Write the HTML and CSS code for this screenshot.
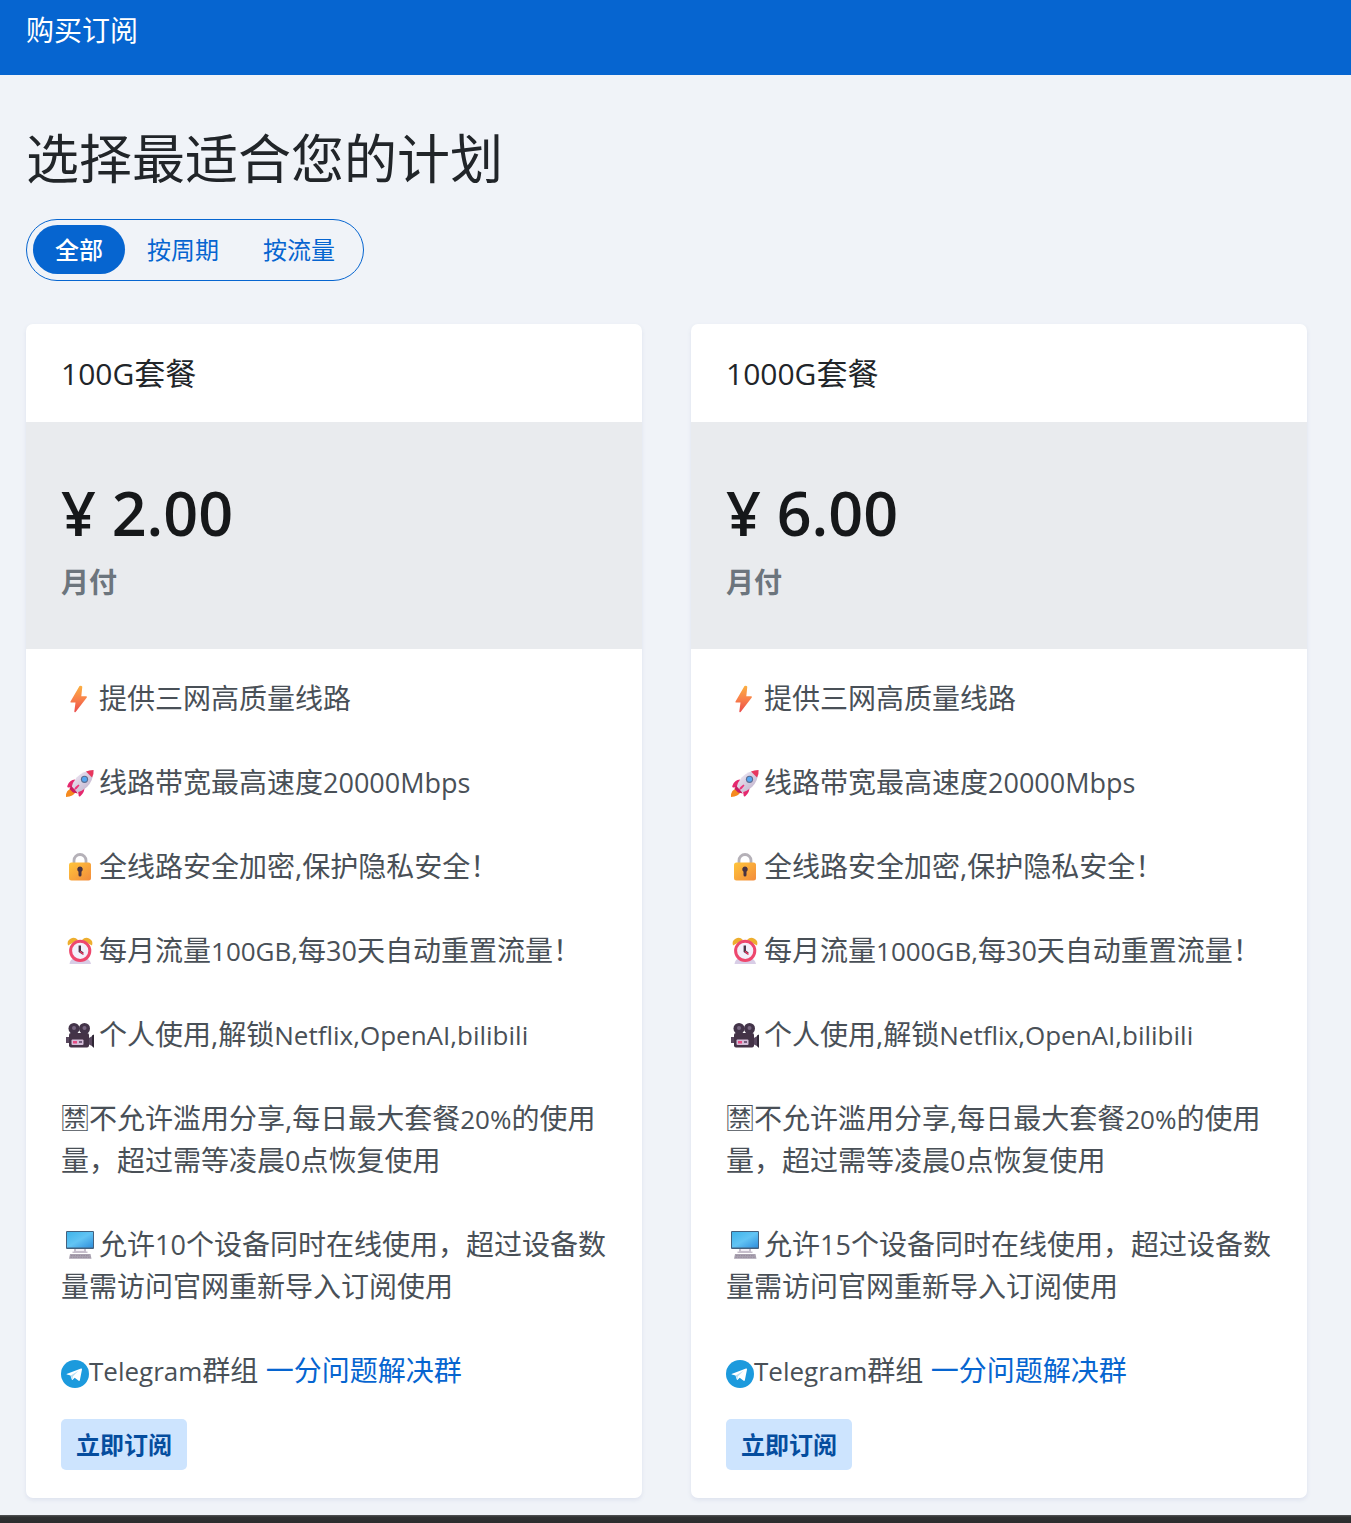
FILE: index.html
```html
<!DOCTYPE html>
<html lang="zh-CN">
<head>
<meta charset="utf-8">
<meta name="viewport" content="width=device-width, initial-scale=1">
<title>购买订阅</title>
<link rel="stylesheet" href="styles.css">
</head>
<body>
<svg class="sprite" aria-hidden="true">
  <defs>
    <linearGradient id="g-bolt" x1="0" y1="0" x2="0" y2="1"><stop offset="0" stop-color="#fbb040"/><stop offset=".5" stop-color="#f9814a"/><stop offset="1" stop-color="#ea4a4a"/></linearGradient>
    <linearGradient id="g-rocket" x1="0" y1="0" x2="1" y2="1"><stop offset="0" stop-color="#f6f0fa"/><stop offset="1" stop-color="#b9aac6"/></linearGradient>
    <linearGradient id="g-lock" x1="0" y1="0" x2="1" y2="1"><stop offset="0" stop-color="#ffc53a"/><stop offset="1" stop-color="#f38b3c"/></linearGradient>
    <linearGradient id="g-screen" x1="0" y1="0" x2="1" y2="1"><stop offset="0" stop-color="#3fb4ea"/><stop offset=".5" stop-color="#62c4f4"/><stop offset="1" stop-color="#2f8fdc"/></linearGradient>
    <symbol id="i-bolt" viewBox="0 0 38 30">
      <path d="M18.500 2 9.500 17.500Q9 18.500 10 18.500H14.500L13.300 27.500Q13.500 29 14.800 27.800L25.800 13.500Q26.300 12.400 25 12.300H20.300L21.300 2.800Q20.500 1 18.500 2Z" fill="url(#g-bolt)"/>
    </symbol>
    <symbol id="i-rocket" viewBox="0 0 38 30">
      <path d="M11 20.500Q4.500 21.500 5 29Q12.500 28.500 14.500 24Z" fill="#f58a1f"/>
      <path d="M14 11.500Q8.500 12 6.500 17.500Q5.500 19.500 8 19.500L15 18ZM23.500 18Q24 24 19.500 28Q17.500 29.500 17.500 26.500L16.500 20Z" fill="#e5286e"/>
      <path d="M32.500 2Q22 2.500 15.500 9.500Q11.500 14.500 10.500 19.500L15.500 24.500Q20.500 23.500 26 19Q32.500 12.500 32.500 2Z" fill="url(#g-rocket)"/>
      <path d="M32.500 2Q28.500 2 25 3.500L31 9.500Q33 5.500 32.500 2Z" fill="#e8375d"/>
      <path d="M10 17.500 17 25.500 12 24.500 8.500 21Z" fill="#c91d62"/>
      <path d="M17.500 16.500Q14.500 18 12.500 22.500Q16.500 21 18.500 17.500Z" fill="#ee3379"/>
      <circle cx="23.500" cy="11.300" r="3.600" fill="#596d91"/><circle cx="23.500" cy="11.300" r="2.500" fill="#56a6f0"/>
    </symbol>
    <symbol id="i-lock" viewBox="0 0 38 30">
      <path d="M13 13V8.500a6 6 0 0 1 12 0V13" fill="none" stroke="#b5b1b8" stroke-width="2.800"/>
      <rect x="8" y="10.500" width="22" height="18" rx="2.500" fill="url(#g-lock)"/>
      <path d="M19 14.500a2.900 2.900 0 0 1 1.500 5.300V23a1.500 1.500 0 0 1-3 0V19.800A2.900 2.900 0 0 1 19 14.500Z" fill="#493341"/>
    </symbol>
    <symbol id="i-clock" viewBox="0 0 38 30">
      <path d="M8.500 28Q9 23 14 22H24Q29 23 30 28Z" fill="#d8cde6"/>
      <path d="M7 9.500Q5.500 5 9.500 2.800Q13.500 0 17 4ZM31 9.500Q32.500 5 28.500 2.800Q24.500 0 21 4Z" fill="#edae2f"/>
      <circle cx="19.200" cy="14.800" r="9.600" fill="#f3f0fb" stroke="#ee476d" stroke-width="3"/>
      <path d="M18.800 9.500V15.300L22 17.500" fill="none" stroke="#493747" stroke-width="2.400"/><path d="M19 15.300 22.500 18.500" stroke="#e83862" stroke-width="1.500"/>
    </symbol>
    <symbol id="i-camera" viewBox="0 0 38 30">
      <path d="M5 17h3v6H5ZM27 18.500 33 15V27L27 24Z" fill="#59485f"/>
      <rect x="8" y="13" width="20" height="14.500" rx="2" fill="#443347"/>
      <circle cx="13" cy="8.500" r="5.500" fill="#433449"/><circle cx="23.500" cy="8.500" r="5.500" fill="#433449"/>
      <circle cx="13" cy="8" r="2" fill="#776680"/><circle cx="23.500" cy="8" r="2" fill="#776680"/>
      <rect x="10.500" y="19.500" width="12" height="5.500" rx="1" fill="#d4bdd8"/>
      <path d="M12 21h4v2.500h-4Z" fill="#e74b83"/><path d="M18 21h3v2h-3Z" fill="#755e7d"/>
      <path d="M31 15.500 33 14.500V28L31 26Z" fill="#2f2635"/>
    </symbol>
    <symbol id="i-computer" viewBox="0 0 38 30">
      <rect x="5" y="1" width="28" height="18" rx="1" fill="#44617e"/>
      <rect x="6" y="2" width="26" height="15.500" fill="url(#g-screen)"/>
      <path d="M13 19h12v2.500h1.500V23h-15V21.500H13Z" fill="#c7bfcc"/>
      <path d="M15 19h8v2h-8Z" fill="#f2eff5"/>
      <path d="M9 24h20.500l1 4.800H8Z" fill="#aaa2b0"/>
      <path d="M10 25.500h18M9.500 27.300h19" stroke="#8b8293" stroke-width=".6" stroke-dasharray="1.500 1"/>
    </symbol>
    <symbol id="i-telegram" viewBox="0 0 28 28">
      <circle cx="14" cy="14" r="14" fill="#1c9add"/>
      <path d="M5.500 14 20 8.500Q21.200 8.200 21 9.500L18.900 20Q18.500 21.400 17.300 20.600L13.700 17.800 11.700 19.700Q10.900 20.300 10.700 19.200L9.500 15.500 6 14.400Q5.300 14.200 5.500 14Z" fill="#fff"/>
      <path d="M9.700 15.500 17.500 10.700 12 16.200 11.300 19.500Z" fill="#b9dff3"/>
    </symbol>
  </defs>
</svg>

<header class="topbar">购买订阅</header>

<main class="content">
  <h1 class="page-title">选择最适合您的计划</h1>
  <nav class="tabs" aria-label="套餐类型">
    <button class="tab tab-active" type="button">全部</button>
    <button class="tab" type="button">按周期</button>
    <button class="tab" type="button">按流量</button>
  </nav>

  <div class="plans">
    <article class="card">
      <h2 class="card-title"><span class="plan-size">100G</span>套餐</h2>
      <div class="price-block">
        <p class="price">¥ 2.00</p>
        <p class="period">月付</p>
      </div>
      <div class="card-body">
        <ul class="features">
          <li><svg class="emoji"><use href="#i-bolt"/></svg>提供三网高质量线路</li>
          <li><svg class="emoji"><use href="#i-rocket"/></svg>线路带宽最高速度<span class="num">20000Mbps</span></li>
          <li><svg class="emoji"><use href="#i-lock"/></svg>全线路安全加密,保护隐私安全！</li>
          <li><svg class="emoji"><use href="#i-clock"/></svg>每月流量<span class="latin">100GB,</span>每<span class="num">30</span>天自动重置流量！</li>
          <li><svg class="emoji"><use href="#i-camera"/></svg>个人使用,解锁<span class="latin">Netflix,OpenAI,bilibili</span></li>
          <li>🈲不允许滥用分享,每日最大套餐<span class="latin">20%</span>的使用量，超过需等凌晨<span class="num">0</span>点恢复使用</li>
          <li><svg class="emoji"><use href="#i-computer"/></svg>允许<span class="num">10</span>个设备同时在线使用，超过设备数量需访问官网重新导入订阅使用</li>
          <li><svg class="telegram"><use href="#i-telegram"/></svg><span class="latin">Telegram</span>群组 <a href="#group">一分问题解决群</a></li>
        </ul>
        <button class="subscribe" type="button">立即订阅</button>
      </div>
    </article>

    <article class="card">
      <h2 class="card-title"><span class="plan-size">1000G</span>套餐</h2>
      <div class="price-block">
        <p class="price">¥ 6.00</p>
        <p class="period">月付</p>
      </div>
      <div class="card-body">
        <ul class="features">
          <li><svg class="emoji"><use href="#i-bolt"/></svg>提供三网高质量线路</li>
          <li><svg class="emoji"><use href="#i-rocket"/></svg>线路带宽最高速度<span class="num">20000Mbps</span></li>
          <li><svg class="emoji"><use href="#i-lock"/></svg>全线路安全加密,保护隐私安全！</li>
          <li><svg class="emoji"><use href="#i-clock"/></svg>每月流量<span class="latin">1000GB,</span>每<span class="num">30</span>天自动重置流量！</li>
          <li><svg class="emoji"><use href="#i-camera"/></svg>个人使用,解锁<span class="latin">Netflix,OpenAI,bilibili</span></li>
          <li>🈲不允许滥用分享,每日最大套餐<span class="latin">20%</span>的使用量，超过需等凌晨<span class="num">0</span>点恢复使用</li>
          <li><svg class="emoji"><use href="#i-computer"/></svg>允许<span class="num">15</span>个设备同时在线使用，超过设备数量需访问官网重新导入订阅使用</li>
          <li><svg class="telegram"><use href="#i-telegram"/></svg><span class="latin">Telegram</span>群组 <a href="#group">一分问题解决群</a></li>
        </ul>
        <button class="subscribe" type="button">立即订阅</button>
      </div>
    </article>
  </div>
</main>
<footer class="bottom-bar"></footer>
</body>
</html>
```
FILE: styles.css
```css
* { box-sizing: border-box; }

body {
  margin: 0;
  min-height: 100vh;
  display: flex;
  flex-direction: column;
  background: #f0f3f8;
  color: #212529;
  font-family: "Open Sans", "Noto Sans CJK SC", sans-serif;
  font-size: 28px;
  line-height: 42px;
}

h1, h2, p, ul { margin: 0; padding: 0; }
button { font-family: inherit; border: 0; cursor: pointer; }
.sprite { position: absolute; width: 0; height: 0; }

.topbar {
  height: 75px;
  padding: 9px 26px;
  background: #0665d0;
  color: #fff;
}

.content {
  flex: 1;
  padding: 52px 44px 17px 26px;
}

.page-title {
  font-size: 53px;
  font-weight: 400;
  line-height: 64px;
}

.tabs {
  display: inline-flex;
  margin: 28px 0 43px;
  padding: 5px 6px 6px;
  border: 1px solid #0665d0;
  border-radius: 32px;
}
.tab {
  height: 49px;
  padding: 0 22px;
  border-radius: 25px;
  background: transparent;
  color: #0665d0;
  font-size: 24px;
  line-height: 36px;
}
.tab-active {
  background: #0665d0;
  color: #fff;
  font-weight: 500;
}

.plans {
  display: grid;
  grid-template-columns: 1fr 1fr;
  gap: 49px;
}
.card {
  background: #fff;
  border-radius: 7px;
  box-shadow: 0 2px 4px #dde2ee;
}
.card-title {
  padding: 28px 35px;
  font-size: 31px;
  font-weight: 400;
  line-height: 42px;
}
.price-block {
  padding: 52px 35px 46px;
  background: #e9ebee;
}
.price {
  color: #16181a;
  font-size: 61px;
  font-weight: 600;
  line-height: 78px;
  margin-bottom: 9px;
}
.period {
  color: #6c757d;
  font-weight: 600;
}

.card-body {
  padding: 28px 34px 28px 35px;
  color: #495057;
}
.features { list-style: none; }
.features li { margin-bottom: 42px; }
.features li:last-child { margin-bottom: 28px; }
.features a { color: #0665d0; text-decoration: none; }

/* Latin runs sit slightly smaller beside the Chinese text */
.latin, .num, .plan-size { line-height: 1; }
.latin { font-size: 26px; }
.num { font-size: 27px; }
.plan-size { font-size: 30px; }

.emoji {
  width: 38px;
  height: 30px;
  vertical-align: -5px;
}
.telegram {
  width: 28px;
  height: 28px;
  vertical-align: -7px;
}

.subscribe {
  display: block;
  height: 51px;
  padding: 0 15px;
  border-radius: 5px;
  background: #cde4fe;
  color: #054d9e;
  font-size: 24px;
  font-weight: 700;
  line-height: 36px;
}

.bottom-bar {
  height: 8px;
  background: linear-gradient(#555759, #303132 2px, #2b2c2d);
}
```
